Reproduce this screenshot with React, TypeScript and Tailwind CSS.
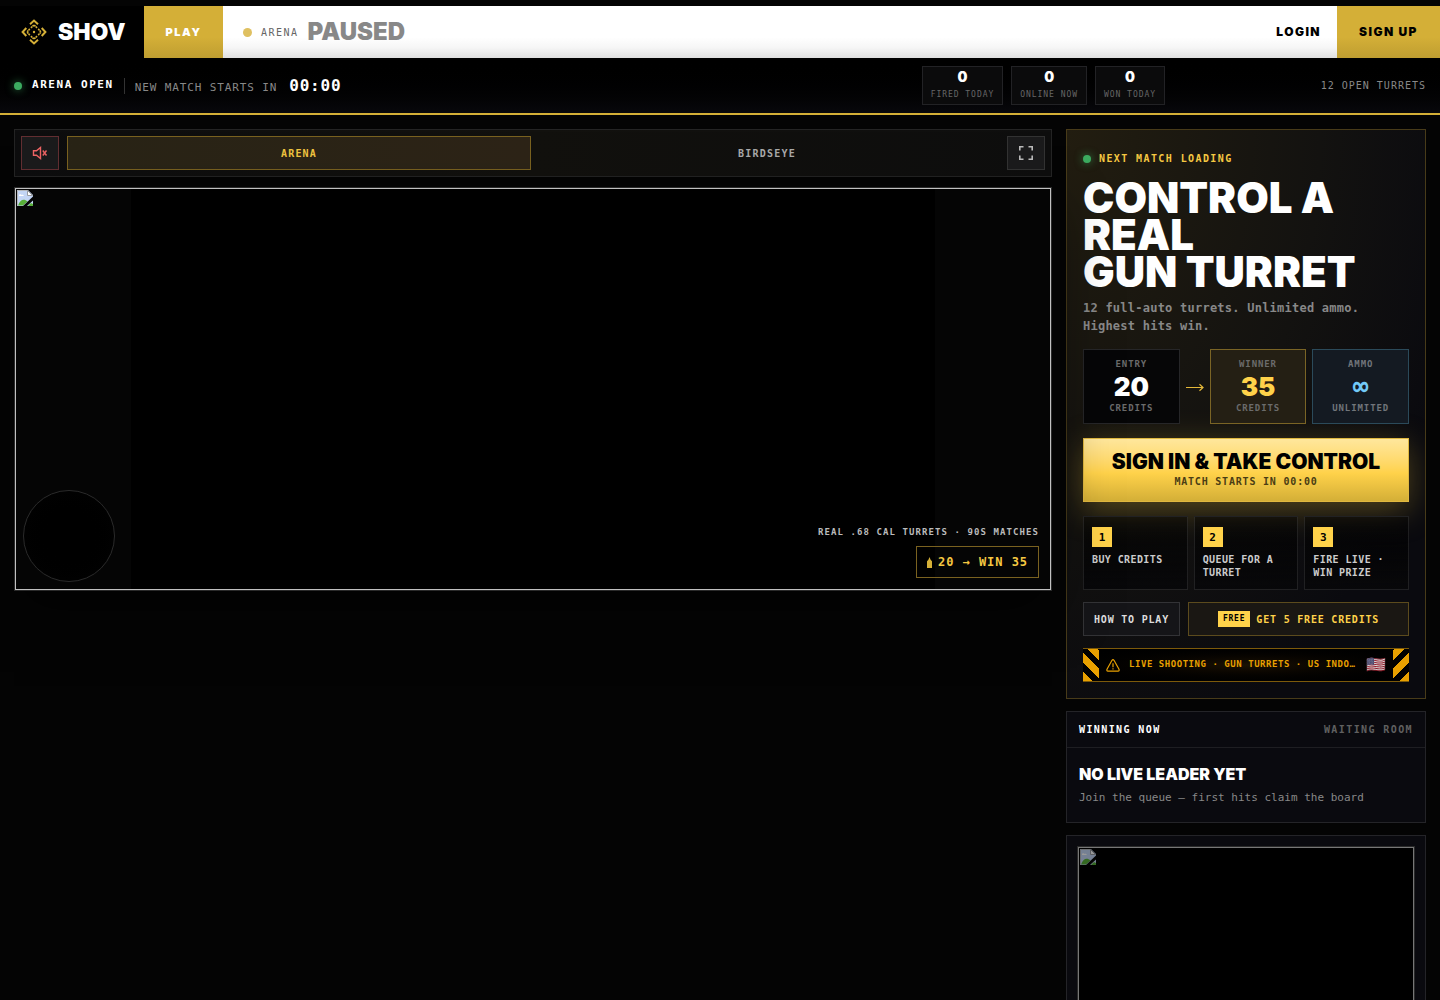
import React, { useState } from 'react';

const display = "font-['Inter','Liberation_Sans',sans-serif] font-black";

const stats = [
  { label: 'FIRED TODAY', value: 0 },
  { label: 'ONLINE NOW', value: 0 },
  { label: 'WON TODAY', value: 0 },
];

const steps = ['BUY CREDITS', 'QUEUE FOR A TURRET', 'FIRE LIVE · WIN PRIZE'];

const Logo = () => (
  <svg width="26" height="26" viewBox="0 0 26 26" fill="none" stroke="#d4af37">
    {[0, 90, 180, 270].map((r) => (
      <g key={r} transform={`rotate(${r} 13 13)`}>
        <path d="M9 5.300 L13 1.600 L17 5.300" strokeWidth="2" />
        <path d="M9.900 8.800 L13 6 L16.100 8.800" strokeWidth="1.6" strokeDasharray="1.8 0.4" />
      </g>
    ))}
    <circle cx="13" cy="13" r="1.2" fill="#d4af37" stroke="none" />
  </svg>
);

const BrokenImage = () => (
  <svg width="16" height="16" viewBox="0 0 16 16" className="block">
    <path d="M0 0h11l5 5v11H0z" fill="#c3d5f5" />
    <path d="M.5 16V.5H11" fill="none" stroke="#b5b8bd" />
    <path d="M2 5.500c0-1.500 2-1.700 2.400-.6C5.600 4.300 7 5 6.800 6H2z" fill="#fff" />
    <path d="M1 15.500c2-6 6-7.500 9.500-4l-4.500 4z" fill="#58b038" />
    <path d="M10.500 .5v5h5z" fill="#fff" stroke="#9a9da2" />
    <path d="M16 6.500L6 16h4l6-5.500z" fill="#050505" />
    <path d="M11 16l3-3 2 1v2z" fill="#58b038" />
  </svg>
);

const Frame: React.FC<{ dim?: boolean }> = ({ dim }) => (
  <div className={`h-full border p-px ${dim ? 'border-[#777777]' : 'border-[#c0c0c0]'}`}>
    <div className={dim ? 'opacity-60' : ''}>
      <BrokenImage />
    </div>
  </div>
);

const Dot = () => (
  <span className="size-2 shrink-0 rounded-full bg-[#3cab60] shadow-[0_0_8px_rgba(60,171,96,0.7)]" />
);

export default function App() {
  const [view, setView] = useState('ARENA');

  return (
    <div className="h-screen overflow-hidden bg-[#040404] pt-1.5 font-['DejaVu_Sans_Mono','Liberation_Mono',monospace] text-white">
      {/* Header */}
      <header className="flex h-[52px] bg-white">
        <a href="#" className="flex w-36 items-center gap-[11px] bg-black pl-[21px]">
          <Logo />
          <span className={`${display} text-[23px] leading-none`}>SHOV</span>
        </a>
        <a
          href="#play"
          className={`${display} flex w-[79px] items-center justify-center bg-linear-to-b from-[#d4af37] from-60% to-[#bf9e31] text-[11px] tracking-[0.14em]`}
        >
          PLAY
        </a>
        <div className="flex flex-1 items-center bg-linear-to-b from-white from-60% via-[#f6f6f6] via-80% to-[#e0e0e0] pl-5 text-black">
          <span className="mr-[9px] size-[9px] rounded-full bg-[#dfc061]" />
          <span className="mr-[9px] text-[10px] tracking-[0.15em] text-[#666666]">ARENA</span>
          <span className={`${display} text-2xl leading-none text-[#888888]`}>PAUSED</span>
          <button className={`${display} ml-auto px-4 text-xs tracking-[0.12em]`}>LOGIN</button>
        </div>
        <button
          className={`${display} w-[103px] bg-linear-to-b from-[#d4af37] from-60% to-[#bf9e31] text-xs tracking-[0.12em] text-black`}
        >
          SIGN UP
        </button>
      </header>

      {/* Match status bar */}
      <section className="flex h-[57px] items-center border-b-2 border-[#d4af37] bg-linear-to-b from-black to-[#08080c] px-3.5">
        <Dot />
        <span className="ml-2.5 text-[11px] font-bold tracking-[0.14em]">ARENA OPEN</span>
        <span className="mx-2.5 h-4 w-px bg-[#333333]" />
        <div className="flex items-baseline gap-3">
          <span className="text-[11px] tracking-[0.08em] text-[#888888]">NEW MATCH STARTS IN</span>
          <span className="text-base font-bold tracking-[0.05em]">00:00</span>
        </div>
        <div className="ml-auto flex gap-2">
          {stats.map((s) => (
            <div key={s.label} className="flex h-[39px] flex-col items-center border border-[#222225] bg-[#0b0b0c] px-2 pt-[3px]">
              <span className={`${display} text-sm leading-[14px]`}>{s.value}</span>
              <span className="mt-1 text-[8px] leading-[14px] tracking-[0.12em] text-[#666666]">{s.label}</span>
            </div>
          ))}
        </div>
        <span className="w-[261px] text-right text-[10px] tracking-widest text-[#888888]">12 OPEN TURRETS</span>
      </section>

      <main className="grid grid-cols-[1fr_360px] items-start gap-3.5 p-3.5">
        {/* Arena */}
        <div>
          <div className="flex gap-2 border border-[#242424] bg-linear-to-r from-[#0d0d0e] via-[#12110e] to-[#0e0e0e] p-1.5">
            <button
              aria-label="Unmute"
              className="flex h-[34px] w-[38px] items-center justify-center border border-[#632f32] bg-[#1b1b1c] text-[#ef6464]"
            >
              <svg width="16" height="16" viewBox="0 0 16 16" fill="none" stroke="currentColor" strokeWidth="1.4">
                <path d="M1.500 5.800h3l4-3.300v11l-4-3.300h-3z" />
                <path d="M10.800 5.500l3.700 5M14.500 5.500l-3.700 5" />
              </svg>
            </button>
            <div className="grid flex-1 grid-cols-2 gap-1 text-[10px] font-bold tracking-[0.12em]">
              {['ARENA', 'BIRDSEYE'].map((v) => (
                <button
                  key={v}
                  onClick={() => setView(v)}
                  className={
                    v === view
                      ? 'border border-[#7a6220] bg-linear-to-r from-[#292416] to-[#2d2417] text-[#f0c440]'
                      : 'border border-transparent text-[#aaaaaa]'
                  }
                >
                  {v}
                </button>
              ))}
            </div>
            <button
              aria-label="Fullscreen"
              className="flex h-[34px] w-[38px] items-center justify-center border border-[#333333] bg-[#1b1b1c] text-[#bbbbbb]"
            >
              <svg width="14" height="14" viewBox="0 0 14 14" fill="none" stroke="currentColor" strokeWidth="1.6">
                <path d="M.8 4.500V.8h3.700M9.500.8h3.700v3.700M13.200 9.500v3.700H9.500M4.500 13.200H.8V9.500" />
              </svg>
            </button>
          </div>

          <div className="relative mt-2.5 h-[404px] border border-[#2a2a2a] bg-linear-to-r from-[#050505] from-[116px] via-black via-[116px] to-black shadow-[0_20px_50px_rgba(0,0,0,0.5)]">
            <div className="absolute inset-y-0 right-0 w-[116px] bg-[#050505]" />
            <div className="relative h-full">
              <Frame />
            </div>
            <div className="absolute bottom-2 left-2 size-[92px] rounded-full border border-[#2a2a2a] bg-radial from-black from-30% to-[#060606]" />
            <div className="absolute right-3 bottom-3 flex flex-col items-end gap-2">
              <span className="text-[9px] leading-3 font-bold tracking-[0.12em] text-[#bbbbbb]">
                REAL .68 CAL TURRETS · 90S MATCHES
              </span>
              <span className="flex h-8 items-center gap-1.5 border border-[#7a6220] px-2.5 text-xs font-bold tracking-[0.08em] text-[#f5c842]">
                <svg width="5" height="11" viewBox="0 0 5 11" fill="#d4af37">
                  <path d="M2.500 0L3.600 2.800 5 4.200V11H0V4.200L1.400 2.800z" />
                </svg>
                20 → WIN 35
              </span>
            </div>
          </div>
        </div>

        <aside className="flex flex-col gap-3">
          {/* Call to action */}
          <div className="overflow-hidden border border-[#483b19] bg-[radial-gradient(ellipse_at_0%_0%,#221d10_0%,#131210_50%,#0a0a0f_80%)] p-4">
            <div className="flex items-center gap-2 pt-[5px] text-[10px] leading-4 font-bold tracking-[0.14em] text-[#f5c842]">
              <Dot />
              NEXT MATCH LOADING
            </div>
            <h1 className={`${display} mt-3 text-[42px] leading-[37px]`}>
              CONTROL A<br />REAL<br />GUN TURRET
            </h1>
            <p className="mt-[9px] text-xs leading-[18px] font-bold tracking-[0.02em] text-[#888888]">
              12 full-auto turrets. Unlimited ammo. Highest hits win.
            </p>

            <div className="mt-3.5 grid grid-cols-[1fr_18px_1fr_1fr] gap-1.5 text-center text-[9px] leading-3 font-bold tracking-widest text-[#6b6b6b]">
              <div className="h-[75px] border border-[#262628] bg-[#060607] pt-2">
                ENTRY
                <div className={`${display} mt-[5px] mb-[3px] text-[26px] leading-6 tracking-normal text-white`}>20</div>
                CREDITS
              </div>
              <svg width="18" height="10" viewBox="0 0 18 10" fill="none" stroke="#e5b93a" strokeWidth="1.2" className="self-center">
                <path d="M0 5.500h17M13.500 2.300L17 5.500l-3.500 3.200" />
              </svg>
              <div className="border border-[#7a6425] bg-[#241f14] pt-2">
                WINNER
                <div className={`${display} mt-[5px] mb-[3px] text-[26px] leading-6 tracking-normal text-[#ffd24a]`}>35</div>
                CREDITS
              </div>
              <div className="border border-[#2b4a5a] bg-[#141a22] pt-2 text-[#71757a]">
                AMMO
                <div className="my-1 text-[26px] leading-6 tracking-normal text-[#72c9f7]">∞</div>
                UNLIMITED
              </div>
            </div>

            <button className="mt-3.5 flex h-16 w-full flex-col items-center justify-center border border-[#e0b840] bg-linear-to-b from-[#ffe79c] via-[#ffd24a] via-55% to-[#d4af37] text-black shadow-[0_8px_32px_rgba(212,175,55,0.35)]">
              <span className={`${display} text-[21px] leading-6`}>SIGN IN &amp; TAKE CONTROL</span>
              <span className="text-[10px] leading-4 font-bold tracking-[0.08em] text-[#4a3d14]">MATCH STARTS IN 00:00</span>
            </button>

            <ol className="mt-3.5 grid grid-cols-3 gap-1.5">
              {steps.map((s, i) => (
                <li
                  key={s}
                  className="h-[74px] border border-white/10 bg-linear-to-b from-black/40 to-[#08080a] px-2 pt-2.5 text-[10px] leading-[13px] font-bold tracking-[0.04em] text-[#cccccc]"
                >
                  <span className="mb-1.5 flex size-5 items-center justify-center bg-[#ffd24a] text-[11px] tracking-normal text-black">
                    {i + 1}
                  </span>
                  {s}
                </li>
              ))}
            </ol>

            <div className="mt-3 flex gap-2 text-[10px] font-bold tracking-[0.08em]">
              <button className="h-[34px] w-[97px] border border-[#333336] bg-[#151518] whitespace-nowrap text-[#dddddd]">
                HOW TO PLAY
              </button>
              <button className="flex flex-1 items-center justify-center gap-1.5 border border-[#5c4b1d] bg-[#1a1713] whitespace-nowrap text-[#ffd24a]">
                <span className="bg-[#ffd24a] px-[5px] text-[8px] leading-4 tracking-widest text-black">FREE</span>
                GET 5 FREE CREDITS
              </button>
            </div>

            {/* Safety strip */}
            <div className="mt-3 flex h-[34px] items-center border-y border-[#7d5a0a] bg-radial from-[#1a1203] to-black text-[#e8a000]">
              <span className="h-full w-4 shrink-0 bg-[repeating-linear-gradient(45deg,#e8a000_0_7px,#000_7px_13px)]" />
              <svg width="14" height="13" viewBox="0 0 14 13" fill="none" stroke="currentColor" strokeWidth="1.2" className="mx-[7px] shrink-0">
                <path d="M6 1.300q1-1.300 2 0l5 9q.6 1.700-1 1.900H2q-1.600-.2-1-1.900z" />
                <path d="M7 4.200v4M7 9.300v1.200" />
              </svg>
              <span className="flex-1 pl-0.5 text-[9px] font-bold tracking-[0.06em] whitespace-nowrap">
                LIVE SHOOTING · GUN TURRETS · US INDO…
              </span>
              <span className="mr-[7px] font-['Noto_Color_Emoji',sans-serif] text-base leading-none opacity-85">🇺🇸</span>
              <span className="h-full w-4 shrink-0 bg-[repeating-linear-gradient(-45deg,#e8a000_0_7px,#000_7px_13px)]" />
            </div>
          </div>

          {/* Leader */}
          <div className="border border-[#242428] bg-[#0a0a0f]">
            <div className="flex h-9 items-center justify-between border-b border-[#1e1e22] px-3 text-[10px] font-bold tracking-[0.14em]">
              <h2>WINNING NOW</h2>
              <span className="text-[#606060]">WAITING ROOM</span>
            </div>
            <div className="h-[74px] px-3 pt-4">
              <h3 className={`${display} text-base leading-5`}>NO LIVE LEADER YET</h3>
              <p className="mt-1.5 text-[11px] leading-4 text-[#888888]">Join the queue — first hits claim the board</p>
            </div>
          </div>

          {/* Replay */}
          <div className="border border-[#242428] bg-[#0a0a0f] p-2.5">
            <div className="aspect-video border border-[#2a2a2a] bg-black">
              <Frame dim />
            </div>
          </div>
        </aside>
      </main>
    </div>
  );
}
